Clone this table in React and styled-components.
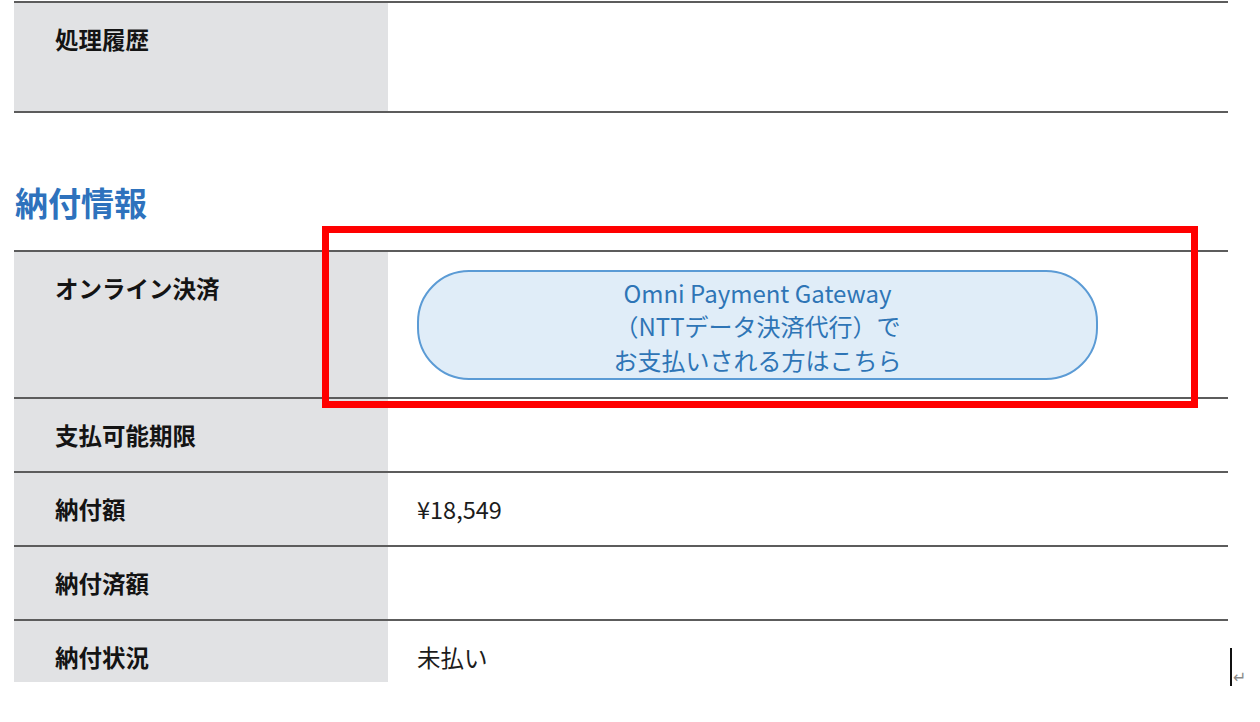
import styled, { createGlobalStyle } from "styled-components";

const GlobalStyle = createGlobalStyle`
  html, body {
    margin: 0;
    padding: 0;
    background: #ffffff;
  }
  body {
    font-family: "Noto Sans CJK JP", "Noto Sans", sans-serif;
    color: #1a1a1a;
  }
`;

const history = [{ label: "処理履歴", height: 108 }];

const payment = [
  { label: "支払可能期限", value: "" },
  { label: "納付額", value: "¥18,549" },
  { label: "納付済額", value: "" },
  { label: "納付状況", value: "未払い", height: 61, last: true },
];

function App() {
  return (
    <>
      <GlobalStyle />
      <Page>
        <Table>
          {history.map((row) => (
            <Row key={row.label} $height={row.height}>
              <Label>{row.label}</Label>
              <Value />
            </Row>
          ))}
        </Table>

        <Heading>納付情報</Heading>

        <Table>
          <Row $height={145}>
            <Label>オンライン決済</Label>
            <Value $top>
              <PayButton type="button">
                Omni Payment Gateway
                <br />
                （NTTデータ決済代行）で
                <br />
                お支払いされる方はこちら
              </PayButton>
            </Value>
          </Row>
          {payment.map((row) => (
            <Row key={row.label} $height={row.height} $last={row.last}>
              <Label>{row.label}</Label>
              <Value>{row.value}</Value>
            </Row>
          ))}
        </Table>

        <Highlight />
        <Caret>
          <span>↵</span>
        </Caret>
      </Page>
    </>
  );
}

const Page = styled.div`
  position: relative;
  width: 1260px;
  height: 722px;
  padding: 1px 0 0 14px;
  box-sizing: border-box;
  overflow: hidden;
`;

const Table = styled.div`
  width: 1214px;
  border-top: 2px solid #5c5c5c;
`;

const Row = styled.div`
  display: grid;
  grid-template-columns: 374px 1fr;
  height: ${({ $height }) => $height || 72}px;
  border-bottom: ${({ $last }) => ($last ? "none" : "2px solid #5c5c5c")};
  overflow: hidden;
`;

const Label = styled.div`
  background: #e1e2e4;
  padding: 19px 0 0 41px;
  font-size: 23.5px;
  line-height: 34px;
  font-weight: 700;
  color: #141414;
`;

const Value = styled.div`
  padding: ${({ $top }) => ($top ? "18px 0 0 29px" : "19px 0 0 29px")};
  font-size: 23.5px;
  line-height: 34px;
  color: #1c1c1c;
`;

const Heading = styled.h2`
  margin: 0;
  padding: 65px 0 0 1px;
  height: 137px;
  box-sizing: border-box;
  font-size: 33px;
  line-height: 48px;
  font-weight: 700;
  color: #2e72bd;
`;

const PayButton = styled.button`
  display: block;
  width: 681px;
  height: 110px;
  padding: 2px 0 0;
  border: 2px solid #5b9bd5;
  border-radius: 52px;
  background: #e0edf8;
  font-family: "Noto Sans CJK JP", "Noto Sans", sans-serif;
  font-size: 24px;
  line-height: 33.5px;
  color: #2e75b6;
  text-align: center;
  cursor: pointer;
`;

const Highlight = styled.div`
  position: absolute;
  left: 322px;
  top: 226px;
  width: 876px;
  height: 182px;
  box-sizing: border-box;
  border: 7px solid #ff0000;
  pointer-events: none;
`;

const Caret = styled.div`
  position: absolute;
  left: 1230px;
  top: 648px;
  width: 2px;
  height: 38px;
  background: #111111;

  span {
    position: absolute;
    left: 3px;
    top: 22px;
    font-family: "DejaVu Sans", sans-serif;
    font-size: 16px;
    line-height: 16px;
    color: #8a8a8a;
  }
`;

export default App;
